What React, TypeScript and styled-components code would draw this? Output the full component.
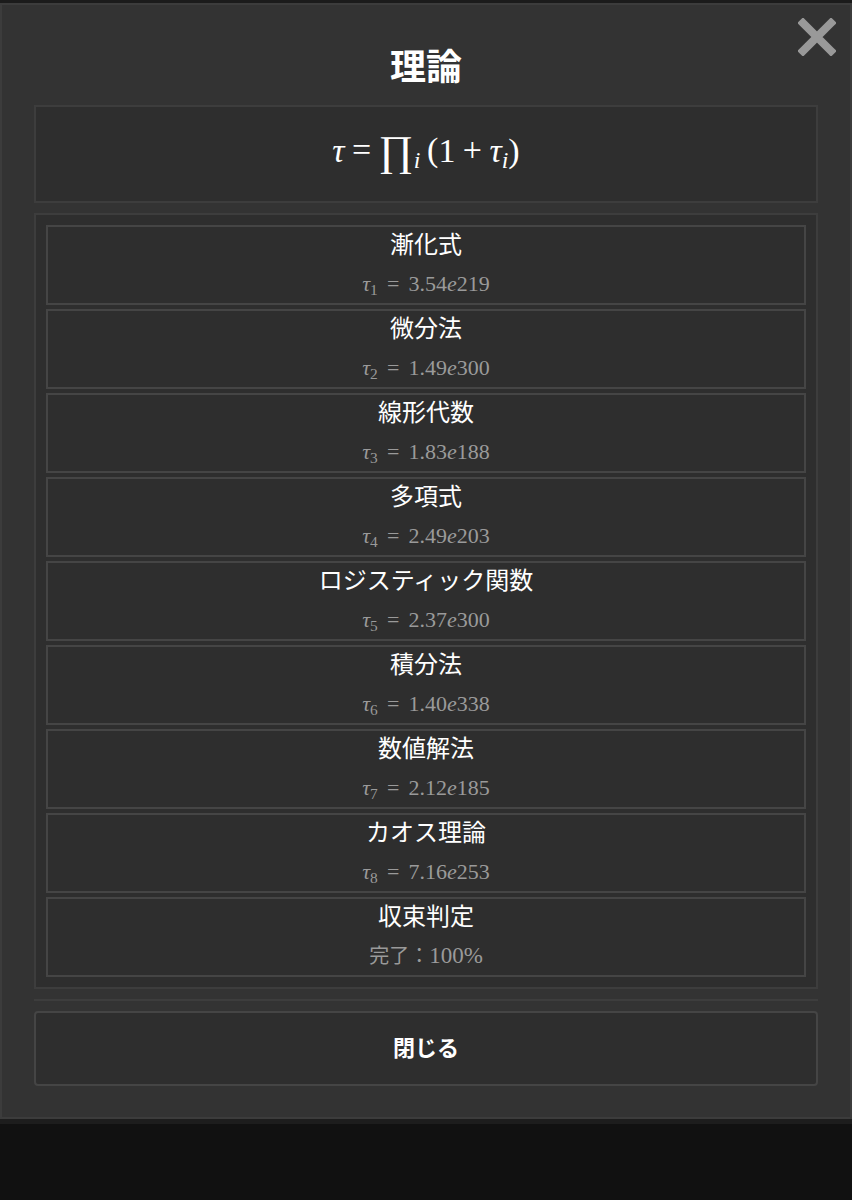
import React from 'react';
import styled, { createGlobalStyle } from 'styled-components';

const GlobalStyle = createGlobalStyle`
  html, body {
    margin: 0;
    padding: 0;
    background: #111111;
  }
  body {
    font-family: "Noto Sans CJK JP", "Noto Sans", sans-serif;
    color: #ffffff;
  }
`;

const Page = styled.div`
  min-height: 1200px;
  background: #111111;
  border-top: 3px solid #1b1b1b;
  box-sizing: border-box;
`;

const Modal = styled.div`
  position: relative;
  box-sizing: border-box;
  width: 852px;
  height: 1116px;
  background: #333333;
  border: 2px solid #3c3c3c;
  padding: 37px 32px 0;
  display: flex;
  flex-direction: column;
  box-shadow: 0 5px 0 #1d1d1d;
`;

const CloseIcon = styled.button`
  position: absolute;
  top: 13px;
  right: 14px;
  width: 38px;
  height: 38px;
  padding: 0;
  border: none;
  background: transparent;
  cursor: pointer;
`;

const Title = styled.h2`
  margin: 0 0 19px;
  font-size: 36px;
  line-height: 44px;
  font-weight: 700;
  text-align: center;
`;

const FormulaBox = styled.div`
  box-sizing: border-box;
  height: 98px;
  border: 2px solid #3d3d3d;
  background: #2e2e2e;
  display: flex;
  align-items: center;
  justify-content: center;
  padding-bottom: 8px;
`;

const List = styled.div`
  margin-top: 10px;
  border: 2px solid #3d3d3d;
  background: #2e2e2e;
  padding: 10px 10px;
  display: flex;
  flex-direction: column;
  gap: 4px;
`;

const Item = styled.div`
  box-sizing: border-box;
  height: 80px;
  border: 2px solid #454545;
  display: flex;
  flex-direction: column;
  align-items: center;
`;

const ItemTitle = styled.div`
  font-size: 24px;
  line-height: 32px;
  color: #ffffff;
`;

const ItemValue = styled.div`
  margin-top: 9px;
  font-size: 20px;
  line-height: 30px;
  color: #9a9a9a;
`;

const Math = styled.span<{ size: number }>`
  font-family: "Liberation Serif", "DejaVu Serif", serif;
  font-size: ${({ size }) => size}px;
  white-space: nowrap;
`;

const Var = styled.i`
  font-style: italic;
`;

const Sub = styled.sub`
  font-size: 0.7em;
  vertical-align: -0.25em;
  line-height: 0;
`;

const Rel = styled.span<{ wide?: boolean }>`
  margin: 0 ${({ wide }) => (wide ? '0.42em' : '0.22em')};
`;

const Big = styled.span`
  font-size: 1.25em;
  vertical-align: -0.08em;
`;

const Divider = styled.hr`
  margin: 10px 0 0;
  border: none;
  height: 2px;
  background: #3d3d3d;
`;

const CloseButton = styled.button`
  margin-top: 10px;
  box-sizing: border-box;
  height: 75px;
  border: 2px solid #454545;
  border-radius: 4px;
  background: #2e2e2e;
  color: #ffffff;
  font-family: "Noto Sans CJK JP", "Noto Sans", sans-serif;
  font-size: 22px;
  font-weight: 700;
  padding-bottom: 6px;
  cursor: pointer;
`;

const ProgressText = styled.span`
  font-family: "Noto Sans CJK JP", sans-serif;
`;

const ProgressNum = styled.span`
  font-family: "Liberation Serif", "DejaVu Serif", serif;
  font-size: 23px;
`;

type Theory = { name: string; value: string };

const theories: Theory[] = [
  { name: '漸化式', value: '3.54|219' },
  { name: '微分法', value: '1.49|300' },
  { name: '線形代数', value: '1.83|188' },
  { name: '多項式', value: '2.49|203' },
  { name: 'ロジスティック関数', value: '2.37|300' },
  { name: '積分法', value: '1.40|338' },
  { name: '数値解法', value: '2.12|185' },
  { name: 'カオス理論', value: '7.16|253' },
];

const TauValue = ({ index, value }: { index: number; value: string }) => {
  const [mant, exp] = value.split('|');
  return (
    <Math size={22}>
      <Var>τ</Var>
      <Sub>{index}</Sub>
      <Rel wide>=</Rel>
      {mant}
      <Var>e</Var>
      {exp}
    </Math>
  );
};

const App = () => {
  return (
    <Page>
      <GlobalStyle />
      <Modal>
        <CloseIcon aria-label="close">
          <svg width="38" height="38" viewBox="0 0 38 38">
            <path d="M5 5 L33 33 M33 5 L5 33" stroke="#999999" strokeWidth="8" strokeLinecap="square" />
          </svg>
        </CloseIcon>
        <Title>理論</Title>
        <FormulaBox>
          <Math size={34}>
            <Var>τ</Var>
            <Rel>=</Rel>
            <Big>∏</Big>
            <Sub>
              <Var>i</Var>
            </Sub>
            <span style={{ marginLeft: '0.2em' }}>(</span>1<Rel>+</Rel>
            <Var>τ</Var>
            <Sub>
              <Var>i</Var>
            </Sub>
            )
          </Math>
        </FormulaBox>
        <List>
          {theories.map((t, i) => (
            <Item key={t.name}>
              <ItemTitle>{t.name}</ItemTitle>
              <ItemValue>
                <TauValue index={i + 1} value={t.value} />
              </ItemValue>
            </Item>
          ))}
          <Item>
            <ItemTitle>収束判定</ItemTitle>
            <ItemValue>
              <ProgressText>完了：</ProgressText>
              <ProgressNum>100%</ProgressNum>
            </ItemValue>
          </Item>
        </List>
        <Divider />
        <CloseButton>閉じる</CloseButton>
      </Modal>
    </Page>
  );
};

export default App;
